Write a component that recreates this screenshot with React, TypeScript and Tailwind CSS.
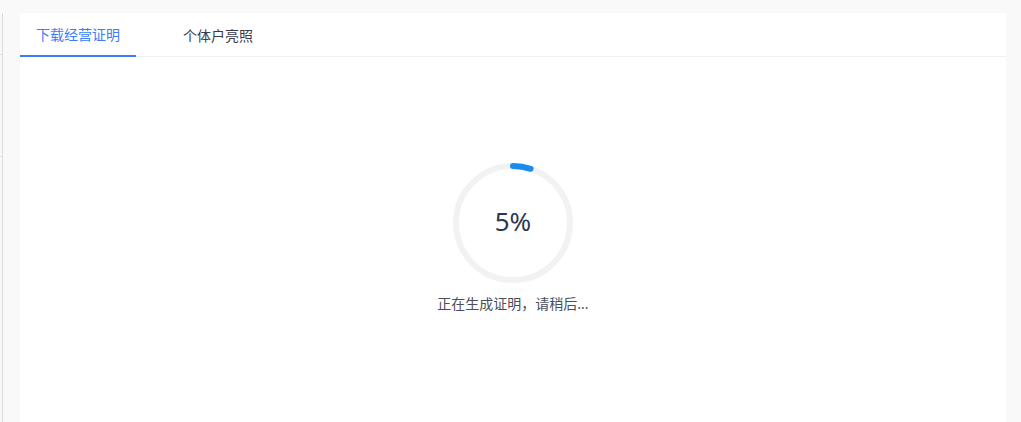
import React from "react";

export default function App() {
  const r = 57;
  const c = 2 * Math.PI * r;
  const pct = 5;
  return (
    <div
      className="h-screen w-full overflow-hidden bg-[#f9f9f9] flex"
      style={{ fontFamily: '"Noto Sans", "Noto Sans CJK SC", sans-serif' }}
    >
      <div className="w-[3px] mt-[13px] border-r border-[#dcdcdc] flex flex-col">
        <div className="h-[42px] border-b border-[#e3e3e3]" />
        <div className="h-[102px] border-b border-[#e3e3e3]" />
      </div>
      <div className="ml-[17px] mt-[13px] w-[986px] bg-white flex flex-col">
        <div className="flex h-[44px] border-b border-[#f0f0f0]">
          <div className="h-[44px] -mb-px px-4 flex items-center border-b-2 border-[#3b7cff] text-[14px] text-[#3b7cff] w-[116px]">
            下载经营证明
          </div>
          <div className="h-[44px] ml-[31px] px-4 flex items-center text-[14px] text-[#3a3a48]">
            个体户亮照
          </div>
        </div>
        <div className="flex flex-col items-center pt-[106px]">
          <div className="relative w-[120px] h-[120px]">
            <svg width="120" height="120" viewBox="0 0 120 120">
              <circle cx="60" cy="60" r={r} fill="none" stroke="#f2f2f2" strokeWidth="6" />
              <circle
                cx="60"
                cy="60"
                r={r}
                fill="none"
                stroke="#1a8cec"
                strokeWidth="6"
                strokeLinecap="round"
                strokeDasharray={`${(c * pct) / 100} ${c}`}
                transform="rotate(-90 60 60)"
              />
            </svg>
            <div className="absolute inset-0 flex items-center justify-center pb-[3px] text-[26px] text-[#2f3850]">
              5%
            </div>
          </div>
          <div className="mt-[11px] text-[14px] leading-[20px] text-[#4a4e5a]">
            正在生成证明，请稍后...
          </div>
        </div>
      </div>
    </div>
  );
}
